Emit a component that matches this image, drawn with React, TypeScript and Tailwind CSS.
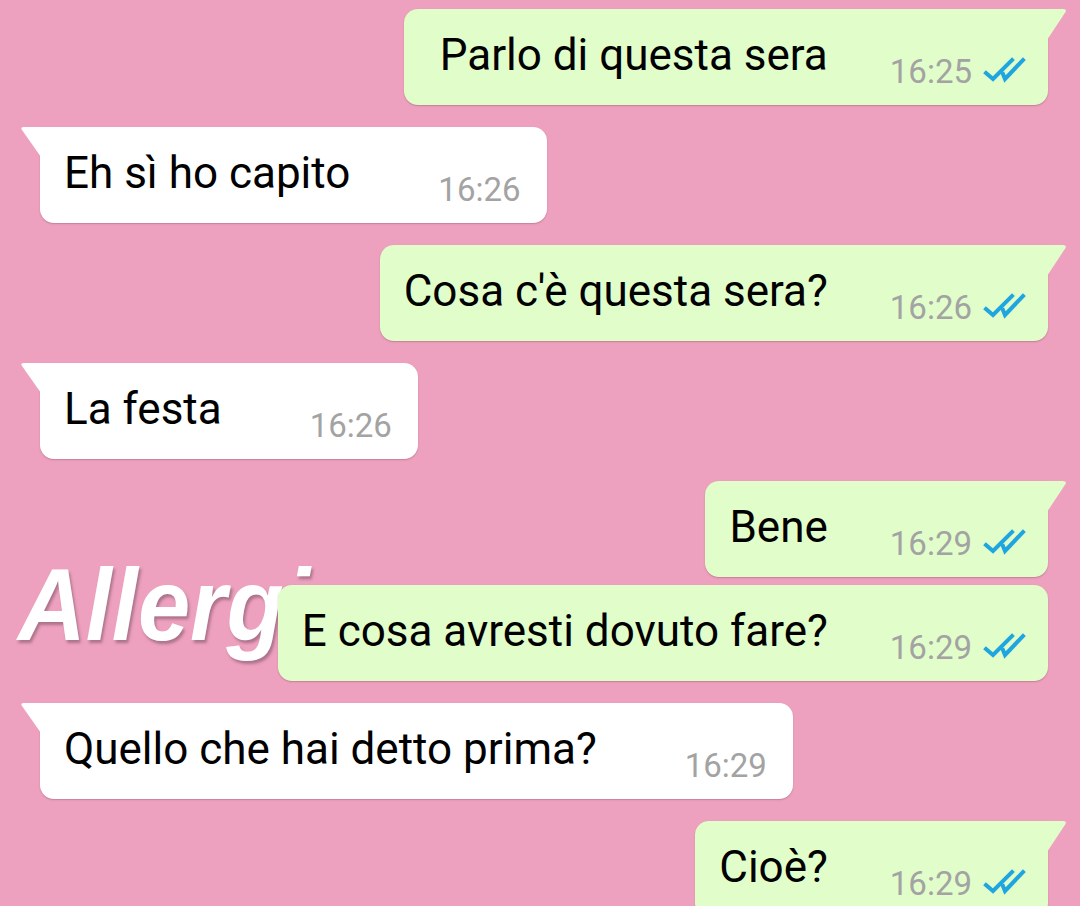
import React from 'react';

type Msg = {
  text: string;
  time: string;
  out: boolean;
  tail: boolean;
  gap: number;
};

const messages: Msg[] = [
  { text: 'Parlo di questa sera', time: '16:25', out: true, tail: true, gap: 9 },
  { text: 'Eh sì ho capito', time: '16:26', out: false, tail: true, gap: 22 },
  { text: "Cosa c'è questa sera?", time: '16:26', out: true, tail: true, gap: 22 },
  { text: 'La festa', time: '16:26', out: false, tail: true, gap: 22 },
  { text: 'Bene', time: '16:29', out: true, tail: true, gap: 22 },
  { text: 'E cosa avresti dovuto fare?', time: '16:29', out: true, tail: false, gap: 8 },
  { text: 'Quello che hai detto prima?', time: '16:29', out: false, tail: true, gap: 22 },
  { text: 'Cioè?', time: '16:29', out: true, tail: true, gap: 22 },
];

const Ticks = () => (
  <svg width="43" height="27" viewBox="0 0 43 27" fill="none" stroke="#1fa6e0" strokeWidth="4" strokeLinecap="square">
    <path d="M3 17 L10 23 L29 4" />
    <path d="M20 18 L22 23 L40 4" />
  </svg>
);

const Bubble = ({ msg, first }: { msg: Msg; first: boolean }) => {
  const bg = msg.out ? 'bg-[#e1fdca]' : 'bg-white';
  const fill = msg.out ? '#e1fdca' : '#ffffff';
  const corner = msg.tail ? (msg.out ? 'rounded-tr-none' : 'rounded-tl-none') : '';

  return (
    <div className={`flex ${msg.out ? 'justify-end pr-[32px]' : 'justify-start pl-[40px]'}`} style={{ marginTop: msg.gap }}>
      <div
        className={`relative z-10 flex h-[96px] rounded-[14px] ${corner} ${bg} shadow-[0_1px_1.5px_rgba(120,60,80,0.35)] ${
          first ? 'pl-[36px]' : 'pl-[24px]'
        } ${msg.out ? 'pr-[22px]' : 'pr-[26px]'}`}
      >
        {msg.tail && msg.out && (
          <svg className="absolute -right-[19px] top-0" width="20" height="32" viewBox="0 0 20 32">
            <path d="M0 0 L16 0 Q20 0 18.5 3 L0 31 Z" fill={fill} />
          </svg>
        )}
        {msg.tail && !msg.out && (
          <svg className="absolute -left-[20px] top-0" width="21" height="31" viewBox="0 0 21 31">
            <path d="M21 0 L4 0 Q0 0 2 3 L21 30 Z" fill={fill} />
          </svg>
        )}
        <div className="mt-[20px] text-[44px] leading-[52px] text-black whitespace-nowrap">{msg.text}</div>
        <div className={`mt-[43px] flex items-start ${msg.out ? 'ml-[62px]' : 'ml-[88px]'}`}>
          <span className="text-[33px] leading-[40px] text-[#a3a3a3]">{msg.time}</span>
          {msg.out && (
            <span className="ml-[11px] mt-[4px]">
              <Ticks />
            </span>
          )}
        </div>
      </div>
    </div>
  );
};

export default function App() {
  return (
    <div className="relative h-[906px] w-[1080px] overflow-hidden bg-[#eda1be]" style={{ fontFamily: 'Roboto, "Noto Sans", sans-serif' }}>
      {/* watermark behind the bubbles */}
      <div
        className="absolute left-[18px] top-[554px] z-0 origin-left scale-x-[0.92] whitespace-nowrap text-[102px] font-bold italic leading-none tracking-[0px] text-white [text-shadow:2px_3px_3px_rgba(110,70,90,0.5)]"
        style={{ fontFamily: '"Liberation Sans", Arial, sans-serif' }}
      >
        Allergia
      </div>
      <div className="flex flex-col">
        {messages.map((m, i) => (
          <Bubble key={i} msg={m} first={i === 0} />
        ))}
      </div>
    </div>
  );
}
